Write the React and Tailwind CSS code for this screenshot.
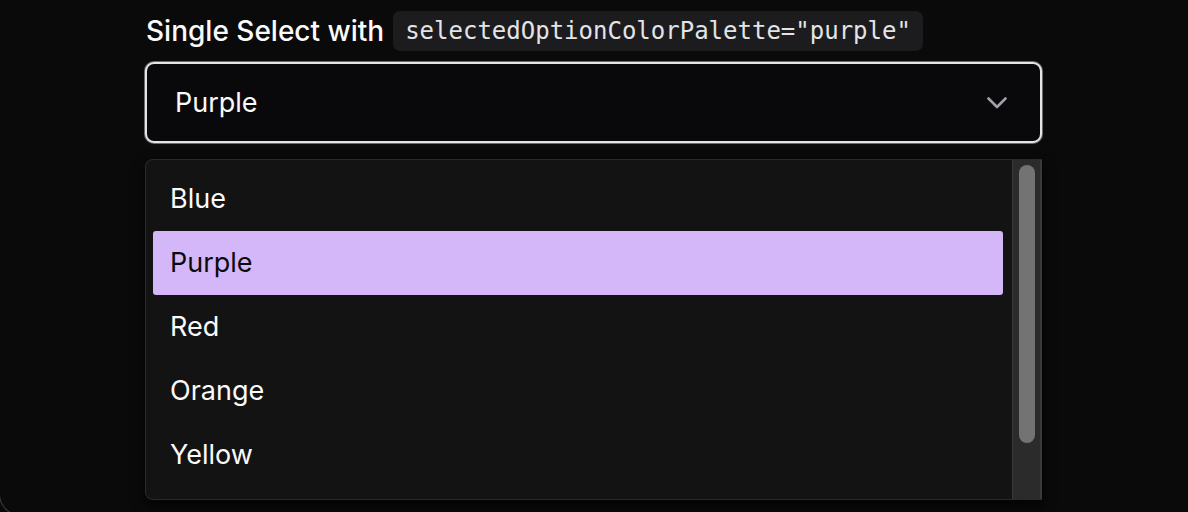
import React from "react";

const options = ["Blue", "Purple", "Red", "Orange", "Yellow"];

export default function App() {
  return (
    <div className="h-[512px] w-[1188px] overflow-hidden bg-[#0a0a0b]">
      <div
        className="-ml-px h-[516px] w-[1400px] rounded-bl-[22px] border-b border-l border-[#3b3b40] bg-[#0a0a0b]"
        style={{ fontFamily: "Inter, 'Noto Sans', sans-serif" }}
      >
        <div className="flex w-[1043px] flex-col pl-[145px] pt-[11px]">
          <div className="flex h-[40px] items-center gap-[9px]">
            <span className="shrink-0 whitespace-nowrap pl-px text-[28px] font-medium leading-none text-[#fafafa]">
              Single Select with
            </span>
            <code
              className="flex h-[40px] shrink-0 items-center whitespace-nowrap rounded-[7px] bg-[#1c1c1f] px-[12px] text-[24px] leading-none text-[#e4e4e7]"
              style={{ fontFamily: "'DejaVu Sans Mono', monospace" }}
            >
              selectedOptionColorPalette="purple"
            </code>
          </div>

          <div className="mt-[11px] flex h-[81px] w-[897px] items-center justify-between rounded-[9px] border-2 border-[#e4e4e7] bg-[#09090b] pl-[28px] pr-[33px] shadow-[0_0_0_1px_rgba(228,228,231,0.45)]">
            <span className="text-[27px] leading-none text-[#fafafa]">Purple</span>
            <svg width="20" height="12" viewBox="0 0 20 12" fill="none">
              <path
                d="M1.5 1.5 L10 10 L18.5 1.5"
                stroke="#a1a1aa"
                strokeWidth="2.6"
                strokeLinecap="round"
                strokeLinejoin="round"
              />
            </svg>
          </div>

          <div className="mt-[16px] flex h-[341px] w-[897px] overflow-hidden rounded-l-[8px] border border-r-0 border-[#2a2a2d] bg-[#131313] shadow-[0_6px_14px_rgba(0,0,0,0.75)]">
            <div className="flex-1 overflow-hidden pl-[7px] pr-[9px] pt-[7px]">
              {options.map((o) => {
                const sel = o === "Purple";
                return (
                  <div
                    key={o}
                    className={
                      sel
                        ? "flex h-[64px] items-center rounded-[3px] bg-[#d3b7f9] pl-[17px] text-[27px] text-[#0b0b0c]"
                        : "flex h-[64px] items-center pl-[17px] text-[27px] text-[#fafafa]"
                    }
                  >
                    {o}
                  </div>
                );
              })}
            </div>
            <div className="flex w-[30px] shrink-0 flex-col border-l border-r-2 border-l-[#3a3a3a] border-r-[#3a3a3a] bg-[#2b2b2b] pt-[5px]">
              <div className="mx-auto h-[278px] w-[16px] rounded-full bg-[#737373]" />
            </div>
          </div>
        </div>
      </div>
    </div>
  );
}
